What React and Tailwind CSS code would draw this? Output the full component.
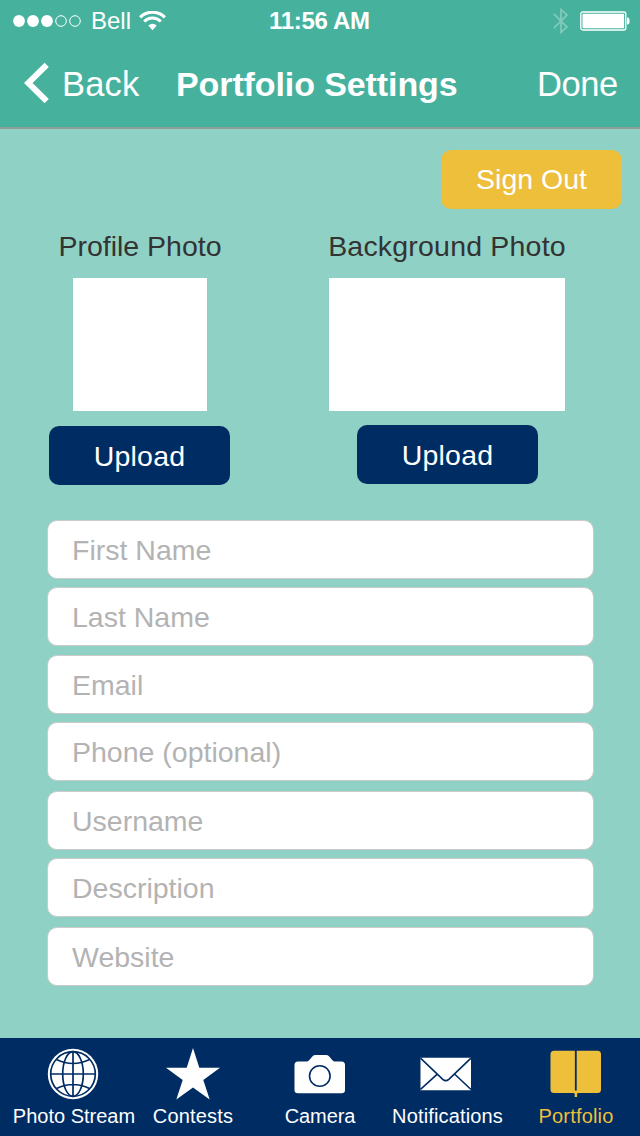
const FIELDS = [
  { label: "First Name", gap: "mt-0" },
  { label: "Last Name", gap: "mt-2" },
  { label: "Email", gap: "mt-[9px]" },
  { label: "Phone (optional)", gap: "mt-[8px]" },
  { label: "Username", gap: "mt-[10px]" },
  { label: "Description", gap: "mt-[8px]" },
  { label: "Website", gap: "mt-[10px]" },
];

function StatusBar() {
  return (
    <div className="flex h-[41px] items-center pl-3">
      <svg className="h-[14px] w-[70px]" viewBox="0 0 70 14">
        <g fill="#fff">
          <circle cx="7" cy="7" r="5.9" />
          <circle cx="21" cy="7" r="5.9" />
          <circle cx="35" cy="7" r="5.9" />
        </g>
        <g fill="none" stroke="#fff">
          <circle cx="49" cy="7" r="5.3" />
          <circle cx="63" cy="7" r="5.3" />
        </g>
      </svg>
      <span className="ml-[9px] w-[42px] text-[24px] leading-[24px]">Bell</span>
      <svg className="ml-[6px] h-5 w-[27px]" viewBox="0 0 27 20">
        <g fill="none" stroke="#fff">
          <path d="M1.2 6.4A17.3 17.3 0 0 1 25.8 6.4" strokeWidth="3.2" />
          <path d="M5.2 10.5A11.7 11.7 0 0 1 21.8 10.5" strokeWidth="3" />
        </g>
        <path d="M9.3 14.4a6.2 6.2 0 0 1 8.4 0L13.5 19.2Z" fill="#fff" />
      </svg>
      <span className="ml-[103px] w-[104px] whitespace-nowrap text-[24px] leading-[24px] font-bold tracking-[-0.3px]">
        11:56 AM
      </span>
      <svg className="ml-[180px] h-[26px] w-4" viewBox="0 0 16 26">
        <path d="M.8 5.8 14 19 8 24.3V1.7L14 7 .8 20.2" fill="none" stroke="#80c9bb" strokeWidth="1.8" />
      </svg>
      <svg className="ml-[11px] h-5 w-[50px]" viewBox="0 0 50 20">
        <rect x="0.8" y="1" width="45" height="18" rx="2" fill="none" stroke="#fff" strokeWidth="1.3" />
        <rect x="2.5" y="2.8" width="41.6" height="14.4" rx="1" fill="#fff" />
        <path d="M47 6.5h.4a2.2 3.5 0 0 1 0 7H47Z" fill="#fff" />
      </svg>
    </div>
  );
}

function Header() {
  return (
    <header className="h-[129px] border-b-2 border-[#8d9e98] bg-[#46b29d] text-white">
      <StatusBar />
      <div className="flex h-[86px] items-center pl-6 text-[34.5px] leading-[40px]">
        <svg className="-mt-[3px] h-[42px] w-[26px]" viewBox="0 0 26 42">
          <path d="M22.7 2.8 4.2 21 22.7 39.2" fill="none" stroke="#fff" strokeWidth="6" />
        </svg>
        <span className="ml-[12px] w-[80px] tracking-[0.2px]">Back</span>
        <h1 className="ml-[34px] w-[286px] whitespace-nowrap text-[34px] font-bold tracking-[-0.1px]">
          Portfolio Settings
        </h1>
        <span className="ml-[75px] tracking-[-0.4px]">Done</span>
      </div>
    </header>
  );
}

function UploadButton({ className }) {
  return (
    <button
      className={`h-[59px] w-[181px] rounded-[10px] bg-[#002c64] pt-px text-[28.5px] tracking-[0.2px] text-white ${className}`}
    >
      Upload
    </button>
  );
}

const GLOBE = (
  <svg className="size-[52px]" viewBox="0 0 52 52" fill="none" stroke="#002c64" strokeWidth="1.7">
    <circle cx="26" cy="26" r="25.2" fill="#fff" stroke="none" />
    <circle cx="26" cy="26" r="22.3" />
    <ellipse cx="26" cy="26" rx="10.3" ry="22.3" />
    <path d="M26 3.7v44.6M3.7 26h44.6M9.5 11.5Q26 19.5 42.5 11.5M9.5 40.5Q26 32.5 42.5 40.5" />
  </svg>
);

const STAR = (
  <svg className="size-[56px]" viewBox="0 0 56 56">
    <path d="M28 2 34.3 21.7H55L38.3 34 44.7 53.5 28 41.5 11.3 53.5 17.7 34 1 21.7H21.7Z" fill="#fff" />
  </svg>
);

const CAMERA = (
  <svg className="h-10 w-[52px]" viewBox="0 0 52 40">
    <path
      d="M4 7.500H12.500Q14 7.500 15.300 6L18.600 2.300Q19.700 1 21.500 1H32Q33.800 1 35 2.300L38.200 6Q39.500 7.500 41 7.500H47.500Q51 7.500 51 11V36Q51 39.200 47.500 39.200H4Q.5 39.200 .5 36V11Q.5 7.500 4 7.500Z"
      fill="#fff"
    />
    <circle cx="25.8" cy="22" r="10.3" fill="none" stroke="#002c64" strokeWidth="1.6" />
  </svg>
);

const ENVELOPE = (
  <svg className="h-[34px] w-[52px]" viewBox="0 0 52 34">
    <path d="M.5 .8H51V33.2H.5Z" fill="#fff" />
    <path
      d="M.5 1.2 22.8 22.3Q25.8 25 28.8 22.3L51 1.2M.5 32.5 17.3 17.2M51 32.5 34.5 17"
      fill="none"
      stroke="#002c64"
      strokeWidth="1.6"
    />
  </svg>
);

const BOOK = (
  <svg className="h-12 w-[52px]" viewBox="0 0 52 48">
    <path
      d="M4 .7H24.9V40.5H26.7V.7H47.5Q51 .7 51 4.2V39.5Q51 43 47.5 43H28.3Q27.1 43 27.1 44.2V47H24.7V44.2Q24.7 43 23.5 43H4Q.5 43 .5 39.5V4.2Q.5 .7 4 .7Z"
      fill="#edbf3b"
    />
  </svg>
);

const TABS = [
  { label: "Photo Stream", icon: GLOBE, box: "w-[148px]", iconBox: "pt-[5px] pr-[2px]", text: "tracking-[0px]" },
  { label: "Contests", icon: STAR, box: "w-[90px]", iconBox: "pt-[5px]", text: "tracking-[0.2px]" },
  { label: "Camera", icon: CAMERA, box: "w-[164px]", iconBox: "pt-[5px]", text: "tracking-[-0.1px]" },
  { label: "Notifications", icon: ENVELOPE, box: "w-[91px]", iconBox: "pt-[5px] pr-[3px]", text: "tracking-[0.15px]" },
  { label: "Portfolio", icon: BOOK, box: "w-[147px] pl-[19px]", iconBox: "pt-[5px]", text: "tracking-[0.2px] text-[#edbf3b]" },
];

export default function App() {
  return (
    <div className="flex h-[1136px] w-[640px] flex-col overflow-hidden bg-[#90d1c5] font-['Liberation_Sans',Arial,sans-serif]">
      <Header />
      <main className="flex-1">
        <div className="flex justify-end pt-[21px] pr-[18px]">
          <button className="h-[59px] w-[181px] rounded-[10px] bg-[#edbf3b] text-[28.5px] text-white">Sign Out</button>
        </div>

        <div className="flex leading-[32px] text-[#333]">
          <section className="ml-[49px] flex w-[182px] flex-col items-center">
            <h2 className="mt-[21px] mb-px whitespace-nowrap text-[28.5px]">Profile Photo</h2>
            <div className="mt-[15px] h-[133px] w-[134px] bg-white" />
            <UploadButton className="mt-[15px] self-start" />
          </section>
          <section className="ml-[96px] flex w-[240px] flex-col items-center">
            <h2 className="mt-[21px] mb-px whitespace-nowrap text-[28.5px] tracking-[0.2px]">Background Photo</h2>
            <div className="mt-[15px] h-[133px] w-[236px] bg-white" />
            <UploadButton className="mt-[14px] ml-[30px] self-start" />
          </section>
        </div>

        <form className="mt-[35px] ml-[47px] flex w-[547px] flex-col">
          {FIELDS.map((f) => (
            <div
              key={f.label}
              className={`flex h-[59px] items-center rounded-[10px] border border-[#cbcbcb] bg-white pt-px pl-6 text-[28.5px] leading-[32px] text-[#b3b3b3] ${f.gap}`}
            >
              {f.label}
            </div>
          ))}
        </form>
      </main>

      <nav className="flex h-[98px] bg-[#002c64] text-[20px] leading-[24px] text-white">
        {TABS.map((t) => (
          <a key={t.label} className={`flex shrink-0 flex-col items-center ${t.box}`}>
            <span className={`flex h-[66px] items-center ${t.iconBox}`}>{t.icon}</span>
            <span className={`whitespace-nowrap ${t.text}`}>{t.label}</span>
          </a>
        ))}
      </nav>
    </div>
  );
}
